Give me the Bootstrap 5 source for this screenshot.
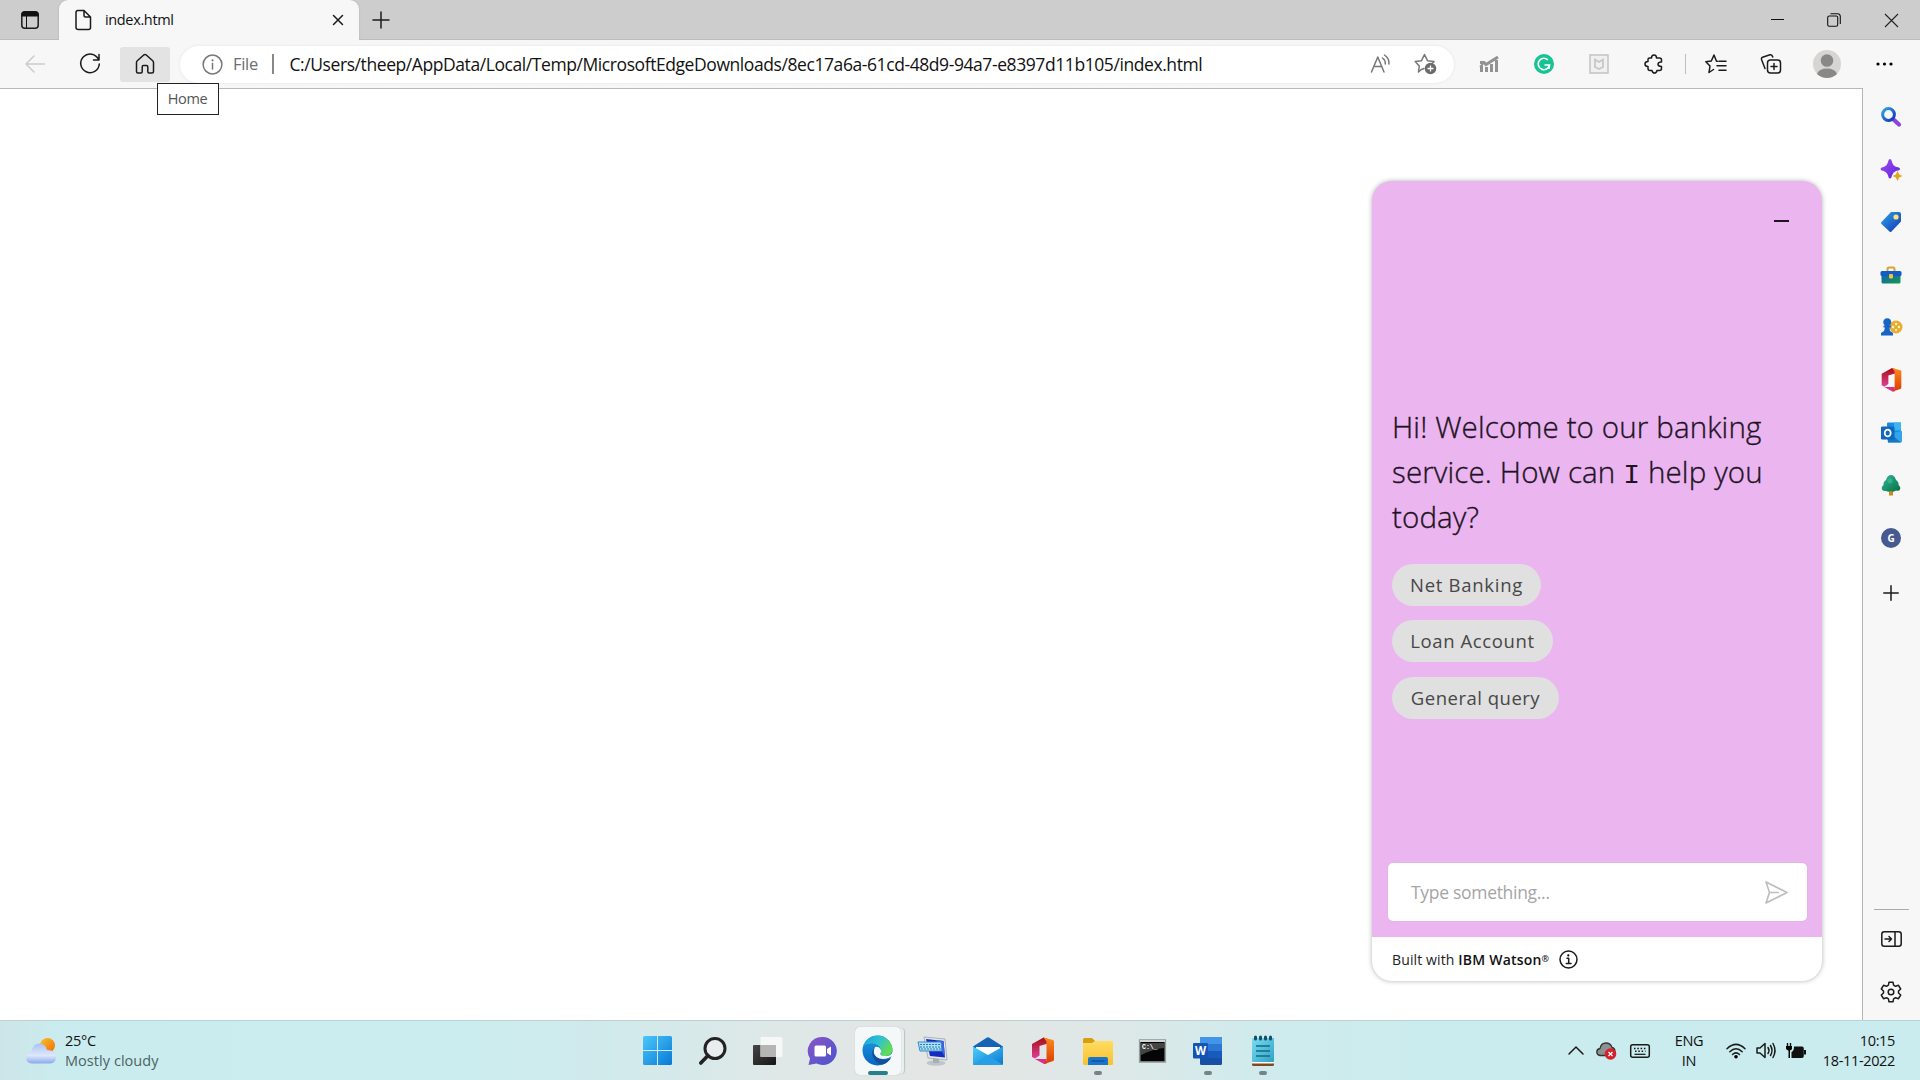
<!DOCTYPE html>
<html lang="en">
<head>
<meta charset="utf-8">
<meta name="viewport" content="width=device-width, initial-scale=1">
<title>index.html</title>
<link href="https://cdn.jsdelivr.net/npm/bootstrap@5.3.0/dist/css/bootstrap.min.css" rel="stylesheet">
<style>
body{width:1920px;height:1080px;overflow:hidden;font-family:"Open Sans","Noto Sans",sans-serif;color:#111;background:#fff}
svg{display:block;flex:none;overflow:visible}
.ln{fill:none;stroke:#1b1b1b;stroke-width:1.5;stroke-linecap:round;stroke-linejoin:round}
.gy{stroke:#777}
.slot{display:flex;align-items:center;justify-content:center;flex:none}
.tabstrip{height:40px;background:#cdcdcd;box-shadow:inset 0 -1px 0 #bcbcbc}
.strip-lead{width:59px}
.tab-active{width:300px;height:40px;background:#f7f7f7;border-radius:9px 9px 0 0;padding-left:13px;padding-right:12px;box-shadow:0 0 2px #aaa;clip-path:inset(-3px -3px 0 -3px)}
.tab-title{font-size:14.5px;letter-spacing:-.35px;margin-left:11px}
.w44{width:44px}.w57{width:57px}.w55{width:55px}
.win-last{width:56px}
.back-slot{width:54px;padding-left:16px}
.reload-slot{width:50px;margin:0 5px 0 11px}
.toolbar{height:48px;background:#f7f7f7}
.home-btn{width:50px;height:35px;background:#e3e3e3;border-radius:3px;margin-right:10px}
.pill{width:1274px;height:37px;flex:none;border-radius:19px;background:#fff;box-shadow:0 0 3px #e2e2e2;padding-left:22px;padding-right:17px}
.pill-file{font-size:16.5px;color:#6d6d6d;margin-left:10px;width:30px;letter-spacing:-.3px}
.pill-rule{width:1.5px;height:20px;background:#888;margin-left:9px;margin-right:16px}
.pill-url{font-size:17.5px;letter-spacing:-.42px;white-space:nowrap}
.pill-star{margin-left:22px}
.pill-after{width:7.5px}
.tool-rule{width:1px;height:20px;background:#bdbdbd;margin:0 3px}
.tip{left:157px;top:83px;width:62px;height:32px;border:1px solid #222;background:#fff;font-size:14.5px;color:#555;letter-spacing:-.4px;z-index:3;padding-right:1px}
.page-area{height:932px}
.viewport-area{width:1862px;border-top:1px solid #b9b9b9;background:#fff;padding-top:92px;padding-right:40px}
.edge-side{width:58px;background:#f7f7f7;border-left:1px solid #b4b4b4;padding-top:2.5px;padding-right:1px}
.side-slot{height:52.6px}
.side-plus{height:59px}
.side-rule{width:35px;height:1px;background:#aaa;margin-left:11px}
.side-panel{height:57px}
.side-gear{height:50px;margin-bottom:3px}
.chat{width:450px;height:800px;border-radius:20px;background:#ebb5f0;box-shadow:0 0 5px rgba(0,0,0,.3);overflow:hidden;font-family:"Open Sans","Noto Sans",sans-serif}
.chat-head{height:80px;padding-right:33px}
.chat-hello{font-size:29.5px;line-height:45.2px;font-weight:300;color:#21121f;letter-spacing:.13px;padding-left:20px;padding-top:143px;white-space:nowrap;-webkit-text-stroke:.35px #21121f}
.hello-two{letter-spacing:.14px}
.slab-i{font-family:"Liberation Mono",monospace;font-size:28px;line-height:1;-webkit-text-stroke:0}
.chips{padding-left:20px;padding-top:24px;gap:14.5px}
.chip{height:42px;border-radius:21px;background:#e0e0e0;color:#474747;font-size:18.5px;padding:0}
.chip-a{width:149px;letter-spacing:.72px}.chip-b{width:161px;letter-spacing:.6px}.chip-c{width:167px;letter-spacing:.5px}
.say{width:419px;height:58px;border-radius:5px;background:#fff;box-shadow:0 0 2px #d9b3dd;margin-left:16px;margin-bottom:16px;padding:0 19px 0 23px;font-size:17.5px;color:#a5a5a5;letter-spacing:-.3px}
.chat-foot{height:44px;background:#fff;padding-left:20px;font-size:14px;color:#222;letter-spacing:.13px}
.chat-foot b{font-weight:600;color:#111;letter-spacing:.2px}
.reg{font-size:9px;vertical-align:3px}
.foot-info{margin-left:10px}
.taskbar{height:60px;border-top:1px solid #bdd0d2;background:linear-gradient(90deg,#cde5e8 0,#caecee 60px,#cbedef 450px,#d0eaec 600px,#dfe8e7 780px,#e3e6e4 940px,#dfe8e7 1100px,#cfebed 1270px,#caecee 1450px,#caecee 100%)}
.taskbar .w55{align-self:stretch}
.weather{width:630px;padding-left:25px;font-size:14.5px;line-height:20px;letter-spacing:-.3px}
.weather div{margin-left:8px}
.muted{color:#4d6264;letter-spacing:.05px}
.run{position:absolute;left:24px;bottom:5px;width:8px;height:4px;border-radius:2px;background:#768488}
.run.on{left:18px;width:20px;background:#26818c}
.task-tile{width:46px;height:48px;background:#f4f8f8;border-radius:5px;box-shadow:0 0 1px #a8b4b4,4px 0 0 -1px #e9eeee,5px 0 1px -1px #b9c4c4}
.tray{padding-right:25px}
.clock{width:80px;font-size:14.5px;line-height:20px;letter-spacing:-.35px}
.lang{width:56px;font-size:14.5px;line-height:20px;letter-spacing:-.3px}
.t36{width:36px}.t24{width:24px}.t43{width:43px}.t38{width:38px}.t22{width:22px}
</style>
<script src="https://cdn.jsdelivr.net/npm/bootstrap@5.3.0/dist/js/bootstrap.bundle.min.js"></script>
</head>
<body class="d-flex flex-column position-relative">
<svg width="0" height="0" class="position-absolute">
<defs>
<linearGradient id="gBlue" x2="1" y2="1"><stop stop-color="#2fa5e6"/><stop offset="1" stop-color="#1134b8"/></linearGradient>
<linearGradient id="gWin" x2="1" y2="1"><stop stop-color="#4cc8fb"/><stop offset="1" stop-color="#0879d6"/></linearGradient>
<linearGradient id="gPur" x2="1" y2="1"><stop stop-color="#a34bf0"/><stop offset="1" stop-color="#5b22dd"/></linearGradient>
<linearGradient id="gBox" x2="1" y2="1"><stop stop-color="#0f5fb8"/><stop offset="1" stop-color="#169a50"/></linearGradient>
<linearGradient id="gTree" x2="1" y2="1"><stop stop-color="#30b8a0"/><stop offset="1" stop-color="#067040"/></linearGradient>
<linearGradient id="gOffR" x2="0" y2="1"><stop stop-color="#ff8b1f"/><stop offset="1" stop-color="#d83b01"/></linearGradient>
<linearGradient id="gOffL" x2="0" y2="1"><stop stop-color="#a80f12"/><stop offset="1" stop-color="#e0409a"/></linearGradient>
<linearGradient id="gMail" x2="1" y2="1"><stop stop-color="#4fd0fb"/><stop offset="1" stop-color="#0a77d0"/></linearGradient>
<linearGradient id="gFold" x2="0" y2="1"><stop stop-color="#ffdc62"/><stop offset="1" stop-color="#f8c02e"/></linearGradient>
<linearGradient id="gNote" x2="1" y2="1"><stop stop-color="#7adcf2"/><stop offset="1" stop-color="#2ea3c4"/></linearGradient>
<linearGradient id="gSun" x2="1" y2="1"><stop stop-color="#fbc02a"/><stop offset="1" stop-color="#ef6c05"/></linearGradient>
<linearGradient id="gCloud" x2="0" y2="1"><stop stop-color="#a9c2f4"/><stop offset=".6" stop-color="#dde8fc"/><stop offset="1" stop-color="#8ba8ea"/></linearGradient>
<linearGradient id="gChat" x2="1" y2="1"><stop stop-color="#8a55c4"/><stop offset="1" stop-color="#4a55cf"/></linearGradient>
<linearGradient id="gEdge" x2="1" y2=".5"><stop stop-color="#1b9de2"/><stop offset=".55" stop-color="#2fc3cf"/><stop offset="1" stop-color="#63dc50"/></linearGradient>
<linearGradient id="gEdge2" x2="0" y2="1"><stop stop-color="#1b9de2"/><stop offset="1" stop-color="#0b63c0"/></linearGradient>
<linearGradient id="gDark" x2="1" y2="1"><stop stop-color="#454545"/><stop offset="1" stop-color="#161616"/></linearGradient>
<symbol id="office" viewBox="0 0 24 28"><path d="M1 7.5 12.5 1 17 2.5V7L8.500 9.500V19L4 22 1 20.500z" fill="url(#gOffL)"/><path d="M4 22.500 15.500 22.500V27.300L13 27.500z" fill="#d8308c"/><path d="M12.500 1 22 3.500Q23 4 23 5V23Q23 24 22 24.500L13 27.500 15.500 24V5z" fill="url(#gOffR)"/></symbol>
</defs>
</svg>

<header class="tabstrip d-flex align-items-center">
  <div class="strip-lead slot"><svg width="18" height="18" viewBox="0 0 18 18"><rect x=".8" y=".8" width="16.400" height="16.400" rx="3" class="ln"/><path d="M1 5V3Q1 1 3 1H15Q17 1 17 3V5zM5.500 5V17" fill="#111" stroke="#111"/></svg></div>
  <div class="tab-active d-flex align-items-center">
    <svg width="22" height="22" viewBox="0 0 22 22"><path class="ln" d="M5.500 1.500H12L18.500 8V18.500Q18.500 20.500 16.500 20.500H6.500Q4 20.500 4 18.500V3.500Q4 1.500 6 1.500M12 1.500V6.500Q12 8 13.500 8H18.500"/></svg>
    <span class="tab-title">index.html</span>
    <svg class="ms-auto me-1" width="10" height="10" viewBox="0 0 10 10"><path class="ln" d="M.5.5 9.500 9.500M9.500.5.5 9.500" stroke-width="1.300"/></svg>
  </div>
  <div class="w44 slot"><svg width="18" height="18" viewBox="0 0 18 18"><path class="ln" d="M9 1V17M1 9H17"/></svg></div>
  <div class="ms-auto d-flex">
    <div class="w57 slot"><svg width="14" height="14" viewBox="0 0 14 14"><path d="M0 6.500H13" stroke="#111"/></svg></div>
    <div class="w57 slot"><svg width="14" height="14" viewBox="0 0 14 14"><g fill="none" stroke="#111" stroke-width="1.100" transform="translate(-1)"><rect x=".7" y="3" width="10" height="10.300" rx="1.500"/><path d="M3.500.7H10.500Q13.300.7 13.300 3.500V11"/></g></svg></div>
    <div class="w57 slot"><svg width="13" height="13" viewBox="0 0 13 13"><path d="M0 0 13 13M13 0 0 13" stroke="#222" stroke-width="1.100"/></svg></div>
  </div>
</header>

<nav class="toolbar d-flex align-items-center">
  <div class="slot back-slot"><svg width="20" height="18" viewBox="0 0 20 18"><path class="ln" style="stroke:#ccc" d="M9 1 1 9 9 17M1 9H19.500"/></svg></div>
  <div class="slot reload-slot"><svg width="22" height="22" viewBox="0 0 22 22"><path class="ln" d="M19.500 6.500A9.300 9.300 0 1 0 20.300 11M20 1.500V7H14.500" stroke-width="1.600"/></svg></div>
  <button class="home-btn btn p-0 slot" aria-label="Home"><svg width="20" height="22" viewBox="0 0 20 22"><path class="ln" d="M1.500 9.500Q1.500 8.500 2.300 7.800L9 1.800Q10 1 11 1.800L17.700 7.800Q18.500 8.500 18.500 9.500V18.500Q18.500 20 17 20H14Q12.800 20 12.800 18.800V14Q12.800 12.500 11.500 12.500H8.500Q7.200 12.500 7.200 14V18.800Q7.200 20 6 20H3Q1.500 20 1.500 18.500z"/></svg></button>
  <div class="pill d-flex align-items-center">
    <svg width="21" height="21" viewBox="0 0 21 21"><circle class="ln gy" cx="10.500" cy="10.500" r="9.400"/><path class="ln gy" d="M10.500 9.500V15"/><circle cx="10.500" cy="6.300" r="1.100" fill="#777"/></svg>
    <span class="pill-file">File</span><span class="pill-rule"></span>
    <span class="pill-url">C:/Users/theep/AppData/Local/Temp/MicrosoftEdgeDownloads/8ec17a6a-61cd-48d9-94a7-e8397d11b105/index.html</span>
    <svg class="ms-auto" width="22" height="20" viewBox="0 0 22 20"><path class="ln gy" d="M1.500 18 7.800 3 14 18M4 12.500H11.700M12.500 4Q15.500 6 15.300 10M14.500 1Q19.500 4.500 19 10" stroke-width="1.300"/></svg>
    <svg class="pill-star" width="23" height="22" viewBox="0 0 23 22"><path class="ln gy" d="M7 16.800 4.500 19 5.300 13 1.200 8.600 7.500 7.700 10.500 1.500 13.500 7.700 20 8.600 18 10.500M7 16.800 10 15.500"/><circle cx="16.500" cy="15.500" r="5.800" fill="#6b6b6b"/><path d="M16.500 12.500V18.500M13.500 15.500H19.500" stroke="#fff" stroke-width="1.300"/></svg>
  </div>
  <div class="pill-after"></div>
  <div class="w55 slot"><svg width="20" height="18" viewBox="0 0 20 18"><path d="M1 11H4V17H1zM6 12H9V17H6zM11 9H14V17H11zM16 5H19V17H16z" fill="#929292"/><path d="M1 7.500H5L7 9.500 19 2" fill="none" stroke="#929292" stroke-width="3"/><path d="M1 12 4 9" stroke="#929292" stroke-width="2"/></svg></div>
  <div class="w55 slot"><svg width="20" height="20" viewBox="0 0 20 20"><circle cx="10" cy="10" r="10" fill="#17c293"/><path d="M14 6A5.700 5.700 0 1 0 15.500 11H10.500M15.500 11 15 15" fill="none" stroke="#fff" stroke-width="1.600"/></svg></div>
  <div class="w55 slot"><svg width="20" height="20" viewBox="0 0 20 20"><rect x="1" y="1" width="18" height="18" fill="#f0f0f0" stroke="#c2c4c4" stroke-width="1.500"/><path d="M6 5.500 10 8 14 5.500V13L10 15 6 13z" fill="none" stroke="#c5c8c8" stroke-width="1.800"/></svg></div>
  <div class="w55 slot"><svg width="20" height="20" viewBox="0 0 20 20"><path class="ln" d="M5.500 4H7.500Q7.500 1 10 1T12.500 4H15.500Q17.500 4 17.500 6V8Q14 8 14 10.200T17.500 12.500V14.500Q17.500 16.500 15.500 16.500H13Q12.500 19 10.500 19T8 16.500H6Q4 16.500 4 14.500V12.500Q1 12.500 1 10T4 7.500V5.500Q4 4 5.500 4z"/></svg></div>
  <span class="tool-rule"></span>
  <div class="w55 slot"><svg width="22" height="20" viewBox="0 0 22 20"><path class="ln" d="M12.500 7.200H11.500L9 1 6.300 7 .8 7.700 5 12 4 18.500 8.500 15.500M14 7.200H21M12 11.700H21M14 16.200H21"/></svg></div>
  <div class="w55 slot"><svg width="22" height="20" viewBox="0 0 22 20"><rect class="ln" x="7.500" y="6" width="13" height="13" rx="3"/><path class="ln" d="M14 9.500V15.500M11 12.500H17M5 14.500 1.500 5.500Q1 3.800 2.500 3.200L10 .8Q12 .3 12.800 3"/></svg></div>
  <div class="w57 slot"><svg width="28" height="28" viewBox="0 0 28 28"><circle cx="14" cy="14" r="14" fill="#d7d5d3"/><circle cx="14" cy="10.500" r="6.300" fill="#8a8886"/><path d="M4 24Q6 18.500 14 18.500T24 24Q19.500 28 14 28T4 24z" fill="#8a8886"/></svg></div>
  <div class="w57 slot"><svg width="17" height="4" viewBox="0 0 17 4"><circle cx="2" cy="2" r="1.600"/><circle cx="8.500" cy="2" r="1.600"/><circle cx="15" cy="2" r="1.600"/></svg></div>
</nav>
<div class="tip position-absolute slot">Home</div>

<div class="page-area d-flex">
  <main class="viewport-area d-flex justify-content-end">
    <section class="chat d-flex flex-column">
      <div class="chat-head d-flex align-items-center justify-content-end"><svg width="15" height="2"><path d="M0 1H15" stroke="#21121f" stroke-width="2"/></svg></div>
      <div class="chat-hello">Hi! Welcome to our banking<br><span class="hello-two">service. How can <span class="slab-i">I</span> help you</span><br>today?</div>
      <div class="chips d-flex flex-column align-items-start">
        <button class="btn chip chip-a">Net Banking</button>
        <button class="btn chip chip-b">Loan Account</button>
        <button class="btn chip chip-c">General query</button>
      </div>
      <div class="say mt-auto d-flex align-items-center justify-content-between"><span>Type something...</span><svg width="23" height="23" viewBox="0 0 23 23"><path d="M1 1 22 11.500 1 22 4.500 11.500zM4.500 11.500H14" fill="none" stroke="#bdbdbd" stroke-width="1.600" stroke-linejoin="round"/></svg></div>
      <footer class="chat-foot d-flex align-items-center"><span>Built with <b>IBM Watson<span class="reg">®</span></b></span><svg class="foot-info" width="19" height="19" viewBox="0 0 19 19"><circle class="ln" cx="9.500" cy="9.500" r="8.500"/><path class="ln" d="M8 8.300H9.700V13.500M7.300 13.500H12" stroke-width="1.300"/><circle cx="9.300" cy="5.400" r="1.100"/></svg></footer>
    </section>
  </main>
  <aside class="edge-side d-flex flex-column">
    <div class="side-slot slot"><svg width="20" height="20" viewBox="0 0 20 20"><path d="M12.500 12.500 18 17.500" stroke="#8b45dd" stroke-width="4.200" stroke-linecap="round"/><circle cx="7.500" cy="7.500" r="5.900" fill="none" stroke="url(#gBlue)" stroke-width="3"/></svg></div>
    <div class="side-slot slot"><svg width="22" height="22" viewBox="0 0 22 22"><path d="M10 1Q11.500 1 12 4 13 8 16.500 9 20 9.500 20 11T16.500 12.800Q13 14 12 17.500 11.500 20.500 10 20.500T8 17.500Q7 14 3.500 13 .5 12.500.5 11T3.500 9Q7 8 8 4 8.500 1 10 1z" fill="url(#gPur)"/><path d="M17.500 13 19.200 16.500 22.500 18 19.200 19.500 17.500 23 15.800 19.500 12.500 18 15.800 16.500z" fill="#dfa51d"/></svg></div>
    <div class="side-slot slot"><svg width="22" height="22" viewBox="0 0 22 22"><path d="M11 1H19Q21 1 21 3V10.500L11.500 20.500Q10.500 21.500 9.500 20.500L1.500 13Q.5 12 1.500 11z" fill="url(#gBlue)"/><circle cx="16" cy="6" r="2.600" fill="#ffe36b"/></svg></div>
    <div class="side-slot slot"><svg width="22" height="18" viewBox="0 0 22 18"><path d="M7.500 6V3Q7.500 1.500 9 1.500H13Q14.500 1.500 14.500 3V6" fill="none" stroke="#d6a436" stroke-width="2"/><rect x="1.500" y="7" width="19" height="10.500" rx="1.500" fill="url(#gBox)"/><rect x=".5" y="5" width="21" height="5" rx="1.500" fill="#155bc6"/><rect x="9" y="8" width="4" height="4.500" rx="1" fill="#f4c13c"/></svg></div>
    <div class="side-slot slot"><svg width="23" height="20" viewBox="0 0 23 20"><circle cx="16" cy="10" r="6.500" fill="#e8ac32"/><g fill="#fff2b9"><circle cx="16" cy="7" r="1.200"/><circle cx="16" cy="13" r="1.200"/><circle cx="13" cy="10" r="1.200"/><circle cx="19" cy="10" r="1.200"/></g><path d="M3.500 8.500H5A4 4 0 1 1 9.500 8.500H11V10.500H9.500L10 14 13 16V18.500H1V16L4 14 5 10.500H3.500z" fill="#1763c8"/></svg></div>
    <div class="side-slot slot"><svg width="23" height="25"><use href="#office"/></svg></div>
    <div class="side-slot slot"><svg width="21" height="21" viewBox="0 0 21 21"><rect x="6" y=".5" width="14" height="11" rx="1" fill="#1a8ce0"/><rect x="13" y=".5" width="7" height="8" fill="#3bb4f2"/><path d="M6 12 21 9V19Q21 20.500 19.500 20.500H7z" fill="#32a5ea"/><path d="M6 9 20 20.500H7z" fill="#1976c6"/><rect y="4.500" width="13.500" height="13" rx="1.300" fill="#0f67c0"/><ellipse cx="6.700" cy="11" rx="3" ry="3.400" fill="none" stroke="#fff" stroke-width="1.800"/></svg></div>
    <div class="side-slot slot"><svg width="20" height="22" viewBox="0 0 20 22"><rect x="8" y="15" width="4" height="6.500" fill="#c98a1d"/><path d="M10 1Q13.500 1 15 6 18 8 17.500 11 20 13 19 15.500 18 17.500 15 16.500 12.500 18.500 10 17 7 18.500 5 16.700 2 17.500 1 15.500 0 13 2.500 11 2 8 5 6 6.500 1 10 1z" fill="url(#gTree)"/><circle cx="9" cy="7" r="2.500" fill="#51c4a0" opacity=".5"/></svg></div>
    <div class="side-slot slot"><svg width="20" height="20" viewBox="0 0 20 20"><circle cx="10" cy="10" r="10" fill="#465a91"/><text x="10" y="13.500" text-anchor="middle" font-size="10" font-weight="700" fill="#fff">G</text></svg></div>
    <div class="side-plus slot"><svg width="16" height="16" viewBox="0 0 16 16"><path class="ln" d="M8 .8V15.200M.8 8H15.200" stroke-width="1.300"/></svg></div>
    <div class="side-rule mt-auto"></div>
    <div class="side-panel slot"><svg width="21" height="16" viewBox="0 0 21 16"><rect class="ln" x=".8" y=".8" width="19.400" height="14.400" rx="2.500"/><path class="ln" d="M14 1V15M4 8H10.500M8 5.500 10.500 8 8 10.500"/></svg></div>
    <div class="side-gear slot"><svg width="22" height="22" viewBox="0 0 22 22"><path class="ln" d="M9 1.200H13L13.600 4.200 15.500 5.300 18.500 4.300 20.700 8 18.500 10V12L20.700 14 18.500 17.700 15.500 16.700 13.600 17.800 13 20.800H9L8.400 17.800 6.500 16.700 3.500 17.700 1.300 14 3.500 12V10L1.300 8 3.500 4.300 6.500 5.300 8.400 4.200z"/><circle class="ln" cx="11" cy="11" r="2.800"/></svg></div>
  </aside>
</div>

<footer class="taskbar d-flex align-items-center">
  <div class="weather d-flex align-items-center"><svg width="32" height="28" viewBox="0 0 32 28"><circle cx="22.500" cy="8.500" r="7.500" fill="url(#gSun)"/><path d="M7 26.500Q1 26 1 20.500T7 14Q7.500 6.500 14.500 6.500 20.500 6.500 22 13 31 13 31 20 31 26 25 26.500z" fill="url(#gCloud)"/></svg><div>25°C<br><span class="muted">Mostly cloudy</span></div></div>
  <div class="w55 slot"><svg width="29" height="29" viewBox="0 0 29 29"><path d="M0 1.500Q0 0 1.500 0H14V14H0zM15 0H27.500Q29 0 29 1.500V14H15zM0 15H14V29H1.500Q0 29 0 27.500zM15 15H29V27.500Q29 29 27.500 29H15z" fill="url(#gWin)"/></svg></div>
  <div class="w55 slot"><svg width="28" height="28" viewBox="0 0 28 28"><circle cx="16" cy="11.500" r="10" fill="#e8eeee" stroke="#222" stroke-width="3"/><path d="M9 18.500 1.800 26" stroke="#222" stroke-width="3.600" stroke-linecap="round"/></svg></div>
  <div class="w55 slot"><svg width="30" height="28" viewBox="0 0 30 28"><rect y="8" width="23" height="20" rx="1" fill="url(#gDark)"/><rect x="7.500" y="0" width="22" height="20" rx="1" fill="#f7f7f7" opacity=".93"/><path d="M7.500 8H23V20H7.500z" fill="#b5b5b5"/></svg></div>
  <div class="w55 slot"><svg width="29" height="28" viewBox="0 0 29 28"><path d="M14.500 0A14 14 0 1 1 8.500 26.500L.5 28 2 21.500A14 14 0 0 1 14.500 0z" fill="url(#gChat)"/><rect x="6.500" y="8.500" width="11.500" height="11" rx="1.500" fill="#fff"/><path d="M19 12 23 9.500V18.500L19 16z" fill="#fff"/></svg></div>
  <div class="w55 slot position-relative"><div class="task-tile slot"><svg width="31" height="31" viewBox="0 0 31 31"><circle cx="15.500" cy="15.500" r="15" fill="url(#gEdge2)"/><path d="M1 11Q5 .5 16 .5 28 1 30.500 14 30.500 20 24 21 18 21 18 18.500 19.500 17 19 14.500 17 8.500 10 8.500 4 8.500 1 11z" fill="url(#gEdge)"/><path d="M14 12Q9 15 10.500 21 13 28 20 29.700 26 28 29 23 25 25.500 20 24.500 13 22.500 14 12z" fill="#124f9c"/><path d="M13 12Q10 18 14.500 22 19 25.500 26.500 23 29 21.500 29 21.500L31 21V17Q28 21.500 24 21 18 21 18 18.500 20 17 18.500 14 16.500 11 13 12z" fill="#f4f8f8"/></svg></div><span class="run on"></span></div>
  <div class="w55 slot"><svg width="30" height="30" viewBox="0 0 30 30"><ellipse cx="18" cy="27" rx="9.500" ry="2.800" fill="#bfc6ca"/><path d="M15 22H21V27H15z" fill="#a7afb4"/><path d="M6 1 27 3 29 24 10 22z" fill="#e2e6e8" stroke="#9ba5ab" stroke-width=".8"/><path d="M8 3 25.500 5 27 21.500 12 20z" fill="#142cc0"/><path d="M18 4 25.500 5 27 21.500z" fill="#3e62e4"/><path d="M0 6H23L24 15H2z" fill="#aee0f6" stroke="#368bc8"/><path d="M2 8.500H22M2 11H22M3 13H23" stroke="#287ab8" stroke-width="1.200" stroke-dasharray="2 1"/></svg></div>
  <div class="w55 slot"><svg width="30" height="28" viewBox="0 0 30 28"><path d="M0 9.500 14 .5Q15 0 16 .5L30 9.500V18H0z" fill="#1565b4"/><path d="M3 10H27V20H3z" fill="#fff"/><path d="M0 9.500 15 18 30 9.500V27Q30 28 29 28H1Q0 28 0 27z" fill="url(#gMail)"/><path d="M0 27.500 15 18 30 28H1z" fill="#279fe8"/></svg></div>
  <div class="w55 slot"><svg width="24" height="29"><use href="#office"/></svg></div>
  <div class="w55 slot position-relative"><svg width="30" height="28" viewBox="0 0 30 28"><path d="M0 2.500Q0 1 1.500 1H9L12 4V9H0z" fill="#d89d12"/><path d="M0 6H9L12 4H29Q30 4 30 5V26.500Q30 28 28.500 28H1.500Q0 28 0 26.500z" fill="url(#gFold)"/><path d="M5 28V22Q5 20 7 20H23Q25 20 25 22V28z" fill="#1a74c8"/><path d="M8.500 24H21.500" stroke="#0c4f96" stroke-width="1.300"/></svg><span class="run"></span></div>
  <div class="w55 slot"><svg width="27" height="24" viewBox="0 0 27 24"><rect x=".7" y="1" width="25.600" height="22" fill="#050505" stroke="#969c9e" stroke-width="1.600"/><path d="M1 2H26" stroke="#d2d6d8" stroke-width="2"/><path d="M2 4H25V9Q14 10 2 16z" fill="#444"/><text x="3" y="10" font-family="Liberation Mono,monospace" font-size="6.500" font-weight="700" fill="#fff">C:\_</text></svg></div>
  <div class="w55 slot position-relative"><svg width="29" height="28" viewBox="0 0 29 28"><rect x="7" width="22" height="28" rx="1.200" fill="#174ea6"/><path d="M7 0H28Q29 0 29 1V7H7z" fill="#4395ea"/><path d="M7 7H29V14H7z" fill="#2b78d4"/><path d="M7 14H29V21H7z" fill="#185abd"/><rect y="6" width="15" height="15.500" rx="1.200" fill="#1553b5"/><text x="7.500" y="18" text-anchor="middle" font-size="11.500" font-weight="700" fill="#fff">W</text></svg><span class="run"></span></div>
  <div class="w55 slot position-relative"><svg width="22" height="30" viewBox="0 0 22 30"><path d="M0 27H22V28.500Q22 30 20.500 30H1.500Q0 30 0 28.500z" fill="#804a1d"/><path d="M0 25.500H22V27.500H0z" fill="#fff"/><rect y="2" width="22" height="24" rx="1" fill="url(#gNote)"/><path d="M4 10H18M4 15H18M4 20H18" stroke="#156a86" stroke-width="1.700"/><path d="M3.500 1V3M8.500 1V3M13.500 1V3M18.500 1V3" stroke="#164f64" stroke-width="3" stroke-linecap="round"/></svg><span class="run"></span></div>
  <div class="tray ms-auto d-flex align-items-center">
    <div class="slot t36"><svg width="16" height="9" viewBox="0 0 16 9"><path class="ln" d="M1 8 8 1 15 8"/></svg></div>
    <div class="slot t24"><svg width="21" height="18" viewBox="0 0 21 18"><path d="M4 13.500Q.8 13 .8 10T4 6.500Q5 1 10 1 14.500 1 16 5.500 19 6 19 10L10 13.500z" fill="#8c9292" stroke="#333" stroke-width="1.300"/><circle cx="14.500" cy="12" r="5.800" fill="#d8202d"/><path d="M12.500 10 16.500 14M16.500 10 12.500 14" stroke="#fff" stroke-width="1.300"/></svg></div>
    <div class="slot t43"><svg width="20" height="14" viewBox="0 0 20 14"><rect class="ln" x=".7" y=".7" width="18.600" height="12.600" rx="2" stroke-width="1.200"/><path d="M4 4.500H16M5 7.300H15.500" stroke="#111" stroke-width="1.500" stroke-dasharray="1.500 1.800"/><path d="M4.500 10.300H15.500" stroke="#111" stroke-width="1.200"/></svg></div>
    <div class="lang text-center">ENG<br>IN</div>
    <div class="slot t38"><svg width="20" height="16" viewBox="0 0 20 16"><path class="ln" d="M1 5.800Q10-3 19 5.800M3.800 8.700Q10 2.800 16.200 8.700M6.500 11.500Q10 8.300 13.500 11.500" stroke-width="1.400"/><circle cx="10" cy="13.800" r="1.800"/></svg></div>
    <div class="slot t22"><svg width="20" height="17" viewBox="0 0 20 17"><path class="ln" d="M1 6H4L9 1.500V15.500L4 11H1zM12 5.500Q14 8.500 12 11.500M14.500 3.500Q17.500 8.500 14.500 13.500M17 1.500Q21 8.500 17 15.500" stroke-width="1.300"/></svg></div>
    <div class="slot t38"><svg width="20" height="16" viewBox="0 0 20 16"><path d="M1.500 0V3M4.500 0V3" stroke="#111" stroke-width="1.400"/><path d="M0 3H6V5.500Q6 7 4 7.500V15H2.500V7.500Q0 7 0 5.500z"/><path d="M8 3.500H16Q17.800 3.500 17.800 5.500V13Q17.800 15 16 15H5.500V9Q8 8 8 3.500z" fill="#111"/><path d="M19 7V11.500" stroke="#111" stroke-width="2"/></svg></div>
    <div class="clock text-end text-nowrap">10:15<br>18-11-2022</div>
  </div>
</footer>
</body>
</html>
